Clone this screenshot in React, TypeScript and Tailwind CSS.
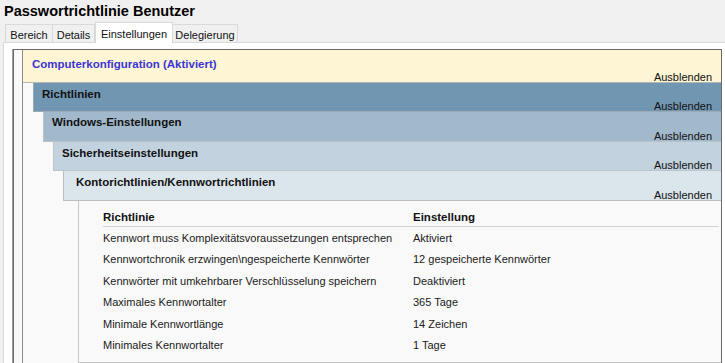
const policies = [
	{ name: "Kennwort muss Komplexitätsvoraussetzungen entsprechen", value: "Aktiviert" },
	{ name: "Kennwortchronik erzwingen\\ngespeicherte Kennwörter", value: "12 gespeicherte Kennwörter" },
	{ name: "Kennwörter mit umkehrbarer Verschlüsselung speichern", value: "Deaktiviert" },
	{ name: "Maximales Kennwortalter", value: "365 Tage" },
	{ name: "Minimale Kennwortlänge", value: "14 Zeichen" },
	{ name: "Minimales Kennwortalter", value: "1 Tage" },
];

function Hide() {
	return (
		<div className="mb-[-1px] mt-auto pr-[9px] text-right text-[11px] leading-[11px] text-[#111]">Ausblenden</div>
	);
}

export default function App() {
	return (
		<div className="flex h-[363px] w-[725px] flex-col overflow-hidden bg-[#f0f0f0] font-['Liberation_Sans',Arial,sans-serif] text-[#111]">
			<div className="h-[22px] pl-[4px] pt-[2px] text-[14.5px] font-bold leading-[18px] text-black">
				Passwortrichtlinie Benutzer
			</div>

			{/* tabs */}
			<div className="relative z-10 mb-[-1px] flex h-[21px] items-start pl-[5px] text-[11px] leading-[16px]">
				<div className="mt-[2px] flex h-[18px] w-[48px] justify-center border border-b-0 border-[#d9d9d9] bg-[#f0f0f0] pt-[2px]">
					Bereich
				</div>
				<div className="mt-[2px] flex h-[18px] w-[42px] justify-center border border-b-0 border-l-0 border-[#d9d9d9] bg-[#f0f0f0] pt-[2px]">
					Details
				</div>
				<div className="flex h-[21px] w-[78px] justify-center border border-b-0 border-[#d9d9d9] bg-white pt-[3px]">
					Einstellungen
				</div>
				<div className="mt-[2px] flex h-[18px] w-[65px] justify-center border border-b-0 border-l-0 border-[#d9d9d9] bg-[#f0f0f0] pt-[2px]">
					Delegierung
				</div>
			</div>

			{/* tab page */}
			<div className="ml-[3px] flex min-h-0 flex-1 flex-col border-l border-t border-[#d9d9d9] bg-white pl-[8px] pt-[6px]">
				<div className="flex flex-1 flex-col border-l border-[#a0a0a0]">
					<div className="mr-[3px] flex flex-1 flex-col border-l border-r border-t border-[#6a6a6a] bg-[#f9f9f9] pl-[8px]">
						<div className="flex flex-1 flex-col border-l border-[#8c8c8c]">
							<div className="flex h-[33px] flex-col border-b border-[#b5b5b5] bg-[#fdf5d3] pl-[9px] pt-[7px]">
								<div className="text-[11.5px] font-bold leading-[14px] text-[#3a36d6]">
									Computerkonfiguration (Aktiviert)
								</div>
								<Hide />
							</div>
							<div className="pl-[10px]">
								<div className="flex h-[29px] flex-col border-b border-l border-[#9aa9b5] bg-[#7196b1] pl-[8px] pt-[4px]">
									<div className="text-[11.5px] font-bold leading-[14px]">Richtlinien</div>
									<Hide />
								</div>
								<div className="pl-[10px]">
									<div className="flex h-[30px] flex-col border-b border-l border-[#b7c1c9] bg-[#a2b9cc] pl-[8px] pt-[3px]">
										<div className="text-[11.5px] font-bold leading-[14px]">Windows-Einstellungen</div>
										<Hide />
									</div>
									<div className="pl-[10px]">
										<div className="flex h-[29px] flex-col border-b border-l border-[#bcc3c9] bg-[#c2d3df] pl-[8px] pt-[4px]">
											<div className="text-[11.5px] font-bold leading-[14px]">Sicherheitseinstellungen</div>
											<Hide />
										</div>
										<div className="pl-[10px]">
											<div className="flex h-[30px] flex-col border-b border-l border-[#b9bec2] bg-[#dbe5ec] pl-[12px] pt-[4px]">
												<div className="text-[11.5px] font-bold leading-[14px]">
													Kontorichtlinien/Kennwortrichtlinien
												</div>
												<Hide />
											</div>
											<div className="pl-[15px]">
												<div className="h-[162px] border-b border-l border-[#c6c6c6] bg-[#f9f9f9] pl-[24px] pr-[2px]">
													<div className="flex h-[26px] border-b border-[#d4d4d4] pt-[9px] text-[11.5px] font-bold leading-[15px]">
														<div className="w-[310px]">Richtlinie</div>
														<div>Einstellung</div>
													</div>
													{policies.map((p) => (
														<div key={p.name} className="flex h-[21.5px] items-center text-[11px] leading-[14px] text-[#1a1a1a]">
															<div className="w-[310px] whitespace-nowrap">{p.name}</div>
															<div className="whitespace-nowrap">{p.value}</div>
														</div>
													))}
												</div>
											</div>
										</div>
									</div>
								</div>
							</div>
						</div>
					</div>
				</div>
			</div>
		</div>
	);
}
